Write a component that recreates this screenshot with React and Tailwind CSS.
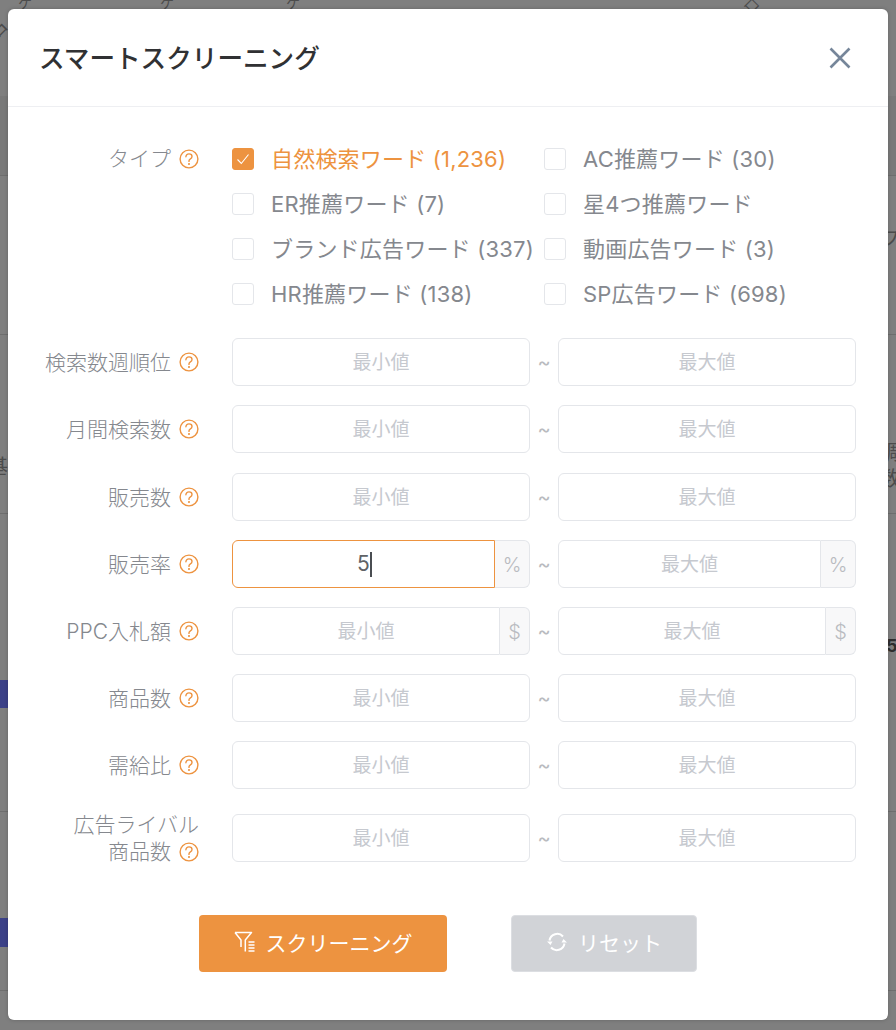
import React from 'react';

const checks = [
    { label: '自然検索ワード (1,236)', checked: true },
    { label: 'AC推薦ワード (30)' },
    { label: 'ER推薦ワード (7)' },
    { label: '星4つ推薦ワード' },
    { label: 'ブランド広告ワード (337)' },
    { label: '動画広告ワード (3)' },
    { label: 'HR推薦ワード (138)' },
    { label: 'SP広告ワード (698)' },
];

const fields = [
    { label: '検索数週順位', className: 'mt-0' },
    { label: '月間検索数', className: 'mt-[19px]' },
    { label: '販売数', className: 'mt-[20px]' },
    { label: '販売率', unit: '%', value: '5', className: 'mt-[19px]' },
    { label: 'PPC入札額', unit: '$', className: 'mt-[19px]' },
    { label: '商品数', className: 'mt-[19px]' },
    { label: '需給比', className: 'mt-[19px]' },
    { label: '広告ライバル', label2: '商品数', className: 'mt-[25px]' },
];

function HelpIcon() {
    return (
        <svg width="20" height="20" viewBox="0 0 20 20" fill="none" stroke="#ed9340" strokeWidth="1.4" className="shrink-0">
            <circle cx="10" cy="10" r="8.9" />
            <path d="M6.9 7.8c0-1.8 1.3-2.9 3.1-2.9 1.7 0 3 1.1 3 2.6 0 1.1-.7 1.8-1.6 2.3-.9.5-1.4 1-1.4 2v.6" strokeLinecap="round" />
            <circle cx="10" cy="15" r="1.05" fill="#ed9340" stroke="none" />
        </svg>
    );
}

function Unit({ unit }) {
    return (
        <div className={`flex items-center justify-center rounded-r-md border border-l-0 border-[#e4e6ea] bg-[#f8f8f9] pt-px text-[20px] font-light text-[#b9bbc0] ${unit === '%' ? 'w-[35px]' : 'w-[30px]'}`}>
            {unit}
        </div>
    );
}

function RangeInput({ placeholder, unit, value }) {
    return (
        <div className="flex h-[48px] w-[298px] rounded-md">
            {value ? (
                <div className="flex flex-1 items-center justify-center rounded-l-md border border-[#ed9340] pl-[2px] text-[21px] text-[#606266]">
                    {value}
                    <span className="h-[25px] w-[2px] bg-[#4a4d52]"></span>
                </div>
            ) : (
                <input
                    placeholder={placeholder}
                    className={`h-full min-w-0 flex-1 border border-[#e4e6ea] pt-px text-center text-[19px] outline-none placeholder:text-[#c6c9cf] ${unit ? 'rounded-l-md' : 'rounded-md'}`}
                />
            )}
            {unit && <Unit unit={unit} />}
        </div>
    );
}

// what shows through the dimmed page around the modal
function Backdrop() {
    return (
        <div className="absolute inset-0 text-[#4c4c4c]">
            <div className="absolute top-[96px] left-0 h-[80px] w-full bg-[#797979]"></div>
            <div className="absolute top-[175px] left-0 h-px w-full bg-[#6e6e6e]"></div>
            <div className="absolute top-[334px] left-0 h-px w-full bg-[#6e6e6e]"></div>
            <div className="absolute top-[513px] left-0 h-px w-full bg-[#6e6e6e]"></div>
            <div className="absolute top-[811px] left-0 h-px w-full bg-[#6e6e6e]"></div>
            <div className="absolute top-[990px] left-0 h-px w-full bg-[#6e6e6e]"></div>
            <div className="absolute top-[680px] left-0 h-[28px] w-[8px] bg-[#3c4188]"></div>
            <div className="absolute top-[918px] left-0 h-[29px] w-[8px] bg-[#3c4188]"></div>
            <span className="absolute top-[14px] left-[-14px] rotate-[-45deg] text-[20px]">名</span>
            <span className="absolute top-[452px] left-[-12px] text-[20px]">基</span>
            <span className="absolute top-[-8px] left-[18px] text-[14px]">ケ</span>
            <span className="absolute top-[-8px] left-[160px] text-[14px]">ケ</span>
            <span className="absolute top-[-8px] left-[286px] text-[14px]">ケ</span>
            <span className="absolute top-[-5px] left-[745px] rotate-45 text-[14px]">口</span>
            <span className="absolute top-[224px] left-[880px] text-[20px]">フ</span>
            <span className="absolute top-[440px] left-[880px] text-[20px] leading-[26px]">調<br />数</span>
            <span className="absolute top-[632px] left-[886px] text-[18px] font-bold text-[#2e2e2e]">5,</span>
        </div>
    );
}

export default function App() {
    return (
        <div className="relative h-[1030px] w-[896px] overflow-hidden bg-[#7f7f7f] pt-[9px] pl-2 font-['Inter','Noto_Sans_CJK_JP',sans-serif]">
            <Backdrop />
            <div className="relative h-[1011px] w-[880px] rounded-md bg-white shadow-[0_0_4px_rgba(0,0,0,0.2)]">
                {/* Header */}
                <div className="flex h-[98px] items-center justify-between border-b border-[#eeeff2] pr-[36px] pl-[31px]">
                    <h1 className="pt-[3px] text-[25.6px] font-medium whitespace-nowrap text-[#303133]">スマートスクリーニング</h1>
                    <svg width="24" height="24" viewBox="0 0 24 24" fill="none" stroke="#76869a" strokeWidth="2.6">
                        <path d="M2.5 2.5l19 19M21.5 2.5l-19 19" />
                    </svg>
                </div>

                {/* Type checkboxes */}
                <div className="flex pt-[41px]">
                    <div className="flex h-[22px] w-[191px] items-center justify-end gap-2 text-[21px] font-light text-[#85888e]">
                        タイプ
                        <HelpIcon />
                    </div>
                    <div className="ml-[33px] grid w-[624px] grid-cols-[312px_312px] gap-y-[23px]">
                        {checks.map((check) => (
                            <div key={check.label} className="flex h-[22px] items-center">
                                <span className={`flex h-[22px] w-[22px] shrink-0 items-center justify-center rounded-[3px] border ${check.checked ? 'border-[#ed9340] bg-[#ed9340]' : 'border-[#e4e6ea] bg-white'}`}>
                                    {check.checked && (
                                        <svg width="14" height="14" viewBox="0 0 14 14" fill="none" stroke="white" strokeWidth="1.1">
                                            <path d="M1.5 7.5l3.8 4L12.5 2.5" />
                                        </svg>
                                    )}
                                </span>
                                <span className={`ml-[17px] text-[22px] tracking-[0.2px] whitespace-nowrap ${check.checked ? 'text-[#ed9340]' : 'text-[#85888e]'}`}>{check.label}</span>
                            </div>
                        ))}
                    </div>
                </div>

                {/* Range fields */}
                <div className="pt-[33px]">
                    {fields.map((field) => (
                        <div key={field.label} className={`flex items-center ${field.className}`}>
                            <div className="flex h-[48px] w-[191px] flex-col justify-center text-right text-[21px] leading-[27px] font-light whitespace-nowrap text-[#85888e]">
                                {field.label2 && <div>{field.label}</div>}
                                <div className="flex items-center justify-end gap-2">
                                    {field.label2 || field.label}
                                    <HelpIcon />
                                </div>
                            </div>
                            <div className="ml-[33px] flex items-center">
                                <RangeInput placeholder="最小値" unit={field.unit} value={field.value} />
                                <span className="w-[28px] text-center text-[20px] text-[#b9bbc0]">~</span>
                                <RangeInput placeholder="最大値" unit={field.unit} />
                            </div>
                        </div>
                    ))}
                </div>

                {/* Actions */}
                <div className="flex pt-[53px] pl-[191px]">
                    <button className="flex h-[57px] w-[248px] items-center justify-center gap-[8px] rounded-[4px] bg-[#ed9340] pt-px text-[21px] text-white">
                        <svg width="24" height="22" viewBox="0 0 24 22" fill="none" stroke="white" strokeWidth="1.5" className="-translate-y-[2px]">
                            <path d="M1 1.5h16.5l-6.2 7.5v11.5M1 1.5l6 7.5v7" strokeLinejoin="round" />
                            <path d="M14.5 11h6M14.5 14h6M14.5 17h6M14.5 20h6" />
                        </svg>
                        スクリーニング
                    </button>
                    <button className="ml-[64px] flex h-[57px] w-[186px] items-center justify-center gap-[10px] rounded-[4px] border border-[#dcdee2] bg-[#d1d3d7] pt-px text-[21px] text-white">
                        <svg width="22" height="20" viewBox="0 0 22 20" fill="none" stroke="white" strokeWidth="2" className="-translate-y-[2px]">
                            <path d="M3.5 8.5A7.8 7.8 0 0 1 17 4.5" />
                            <path d="M18.5 11.5A7.8 7.8 0 0 1 5 15.5" />
                            <path d="M17.5 7l3.5 3.5h-5.5zM4.5 13L1 9.5h5.5z" fill="white" stroke="none" />
                        </svg>
                        リセット
                    </button>
                </div>
            </div>
        </div>
    );
}
